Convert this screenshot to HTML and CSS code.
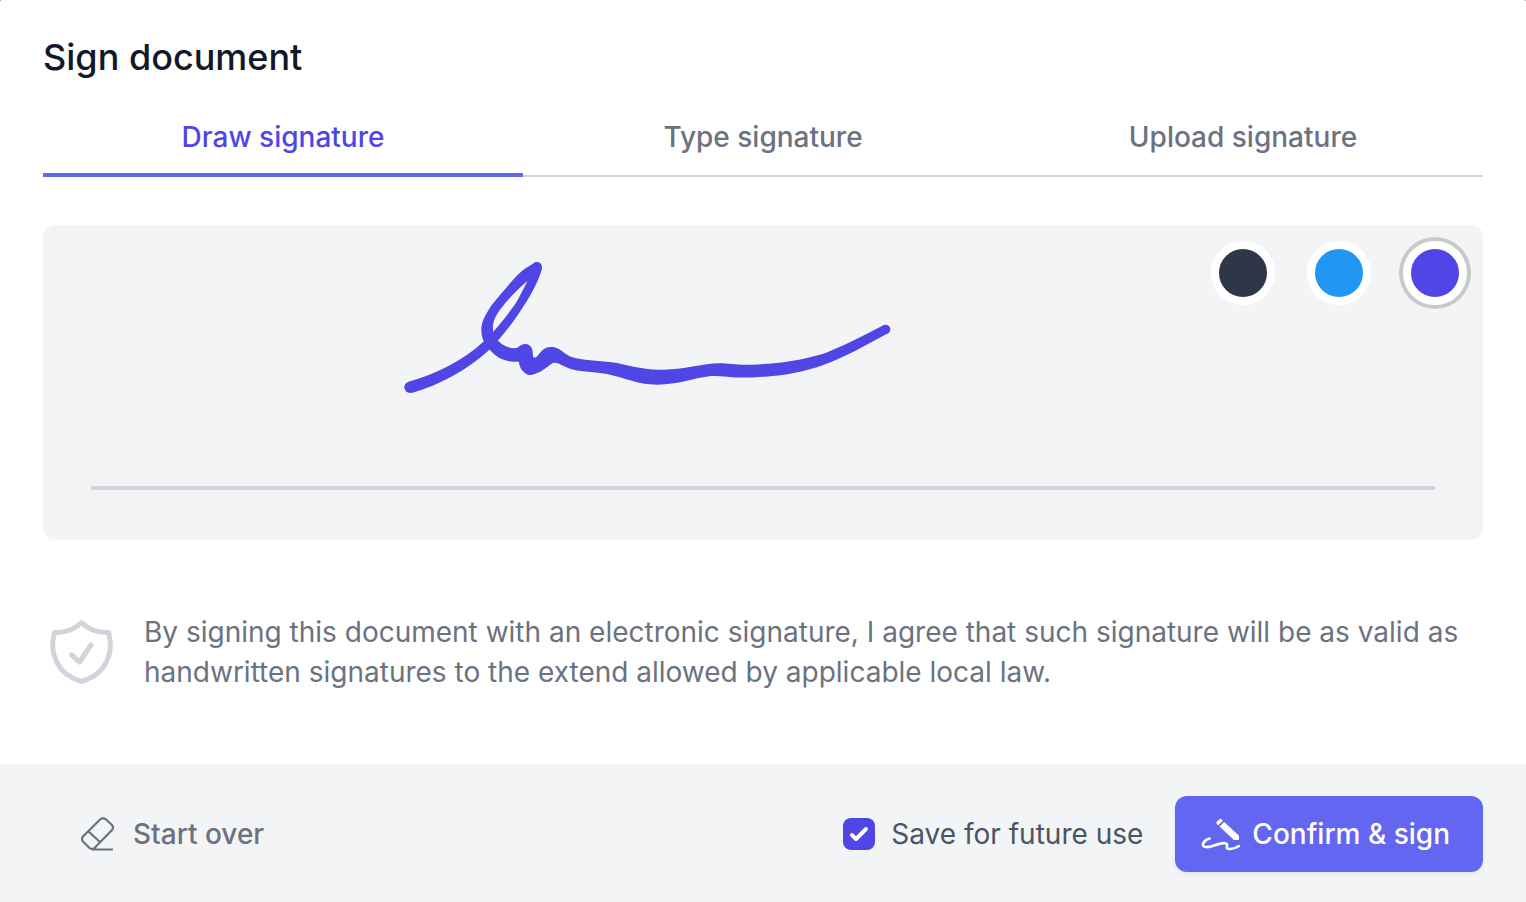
FILE: index.html
```html
<!DOCTYPE html>
<html lang="en">
<head>
    <meta charset="UTF-8">
    <meta name="viewport" content="width=device-width, initial-scale=1.0">
    <title>Sign document</title>
    <link rel="stylesheet" href="styles.css">
</head>
<body>
    <form class="dialog">
        <div class="content">
            <h1 class="title">Sign document</h1>

            <div class="tabs" role="tablist">
                <button class="tab active" type="button" role="tab" aria-selected="true">Draw signature</button>
                <button class="tab" type="button" role="tab" aria-selected="false">Type signature</button>
                <button class="tab" type="button" role="tab" aria-selected="false">Upload signature</button>
            </div>

            <!-- Drawing pad -->
            <div class="pad">
                <div class="colors">
                    <input class="color dark" type="radio" name="color" aria-label="Dark">
                    <input class="color blue" type="radio" name="color" aria-label="Blue">
                    <input class="color indigo" type="radio" name="color" aria-label="Indigo" checked>
                </div>
                <svg class="ink" viewBox="0 0 1530 480" aria-hidden="true">
                    <circle cx="60" cy="412" r="17"/>
                    <circle cx="441" cy="51" r="15"/>
                    <circle cx="1487" cy="238" r="14"/>
                    <path d="M55 395C150 368 222 328 280 275C322 236 355 192 380 155C395 128 404 110 412 93L427 46L456 57C440 108 416 146 390 185C370 215 348 245 325 270L295 302C230 360 155 402 65 429Z"/>
                    <path d="M436 37C425 45 408 52 390 68C370 86 350 112 330 135C312 156 300 170 290 190C278 210 274 225 274 240C274 263 282 281 298 298C319 325 350 336 375 335L387 335C387 349 394 359 404 368C412 376 422 377 434 372C456 366 472 350 488 339C502 334 515 347 545 358C575 366 630 367 660 374C700 382 735 399 780 403C850 409 910 384 962 378C995 376 1040 387 1110 381C1180 378 1240 366 1300 345C1370 320 1430 284 1494 250L1480 226C1410 262 1350 293 1300 311C1220 335 1150 341 1085 344C1040 346 1010 339 985 340C940 340 890 358 820 359C755 361 710 343 665 337C625 332 575 331 547 322C525 315 510 292 488 291C458 289 451 310 440 320C435 324 430 324 429 318L428 304C426 289 416 282 405 282C390 282 388 294 374 295C350 295 331 280 320 268C306 250 306 225 314 207C328 174 370 130 412 93L450 61Z"/>
                </svg>
                <div class="line"></div>
            </div>

            <div class="notice">
                <svg class="shield" viewBox="0 0 76 76" fill="none" stroke="currentColor" stroke-linecap="round" stroke-linejoin="round" aria-hidden="true">
                    <path stroke-width="5" d="M38.500 8.500C31.500 15.500 23 19 11.500 18.500C6 38 13 60 38.500 67.500C64 60 71 38 65.500 18.500C54 19 45.500 15.500 38.500 8.500Z"/>
                    <path stroke-width="5" d="M28.500 41L36.500 48L48 31"/>
                </svg>
                <p class="notice-text">By signing this document with an electronic signature, I agree that such signature will be as valid as handwritten signatures to the extend allowed by applicable local law.</p>
            </div>
        </div>

        <div class="footer">
            <button class="reset" type="reset">
                <svg class="eraser" viewBox="0 0 36 36" fill="none" stroke="currentColor" stroke-width="2.200" stroke-linejoin="round" aria-hidden="true">
                    <path d="M20 3.500L3 20.500Q1 23 3 25.500L9.500 32Q12 34 14.500 32L32 14Q34 11.500 32 9L26 3.500Q23 1 20 3.500ZM8.500 15.500L20.500 26.500M12 33.500H33"/>
                </svg>
                Start over
            </button>
            <label class="save">
                <input class="checkbox" type="checkbox" checked>
                Save for future use
            </label>
            <button class="confirm" type="submit">
                <svg class="pen" viewBox="0 0 40 36" aria-hidden="true">
                    <path fill="currentColor" d="M15.500 6L18.500 3.200Q19.500 2.400 20.500 3.200L22 4.800L17.300 9.300L15.700 7.700Q14.800 6.800 15.500 6ZM18.500 10.500L23.200 6L38 19.800V24H33Z"/>
                    <path fill="none" stroke="currentColor" stroke-width="2.600" stroke-linecap="round" d="M8.500 22.500C4 23.500 0 28.500 3 30.500C8 33.500 17 26.500 24 27.200C28.500 27.800 24 31.500 26.500 32.500C29.500 33.500 34 32.500 38 30"/>
                </svg>
                Confirm &amp; sign
            </button>
        </div>
    </form>
</body>
</html>
```
FILE: styles.css
```css
:root {
    --indigo: #4f46e5;
    --indigo-light: #6366f1;
    --gray-100: #f3f4f6;
    --gray-300: #d1d5db;
    --gray-500: #6b7280;
    --gray-600: #4b5563;
    --gray-900: #111827;
}

* {
    margin: 0;
    padding: 0;
    box-sizing: border-box;
}

body {
    background: #888;
    color: var(--gray-500);
    font-family: Inter, sans-serif;
    font-size: 28px;
    line-height: 40px;
}

button {
    border: none;
    background: none;
    color: inherit;
    font: inherit;
    font-weight: 500;
    cursor: pointer;
}

.dialog {
    display: flex;
    flex-direction: column;
    min-height: 100vh;
    background: #fff;
    border-radius: 2px 2px 0 0;
}

.content {
    flex: 1;
    padding: 33px 43px 0;
}

.title {
    color: var(--gray-900);
    font-size: 36px;
    font-weight: 500;
    line-height: 48px;
}

/* Tabs */
.tabs {
    display: grid;
    grid-template-columns: repeat(3, 1fr);
    margin: 36px 0 48px;
}

.tab {
    height: 60px;
    padding-bottom: 18px;
    border-bottom: 2px solid var(--gray-300);
}

.tab.active {
    padding-bottom: 16px;
    border-bottom: 4px solid var(--indigo-light);
    color: var(--indigo);
}

/* Drawing pad */
.pad {
    position: relative;
    display: flex;
    flex-direction: column;
    justify-content: space-between;
    min-height: 315px;
    padding: 16px 16px 50px;
    background: var(--gray-100);
    border-radius: 12px;
}

.colors {
    display: flex;
    justify-content: flex-end;
    gap: 32px;
}

.color {
    appearance: none;
    width: 64px;
    height: 64px;
    border: 8px solid #fff;
    border-radius: 50%;
    cursor: pointer;
}

.color:checked {
    box-shadow: 0 0 0 4px #c8c9ca;
}

.dark {
    background: #2d3748;
}

.blue {
    background: #2196f3;
}

.indigo {
    background: var(--indigo);
}

.ink {
    position: absolute;
    top: 25px;
    left: 347px;
    width: 510px;
    height: 160px;
    fill: var(--indigo);
}

.line {
    height: 4px;
    margin: 0 32px;
    background: var(--gray-300);
}

/* Legal notice */
.notice {
    display: flex;
    align-items: center;
    gap: 25px;
    padding: 72px 0;
}

.shield {
    flex: none;
    width: 76px;
    height: 76px;
    color: var(--gray-300);
}

/* Footer */
.footer {
    display: flex;
    align-items: center;
    padding: 32px 43px 30px;
    background: var(--gray-100);
}

.reset {
    display: flex;
    align-items: center;
    gap: 17px;
    margin-right: auto;
    padding: 0 37px;
}

.eraser {
    width: 36px;
    height: 36px;
}

.save {
    display: flex;
    align-items: center;
    gap: 16px;
    margin-right: 32px;
    color: var(--gray-600);
    cursor: pointer;
}

.checkbox {
    appearance: none;
    width: 32px;
    height: 32px;
    border-radius: 8px;
}

.checkbox:checked {
    background: var(--indigo) url("data:image/svg+xml,%3Csvg viewBox='0 0 16 16' fill='white' xmlns='http://www.w3.org/2000/svg'%3E%3Cpath d='M12.207 4.793a1 1 0 010 1.414l-5 5a1 1 0 01-1.414 0l-2-2a1 1 0 011.414-1.414L6.500 9.086l4.293-4.293a1 1 0 011.414 0z'/%3E%3C/svg%3E") center / 100% 100%;
}

.confirm {
    display: flex;
    align-items: center;
    gap: 11px;
    padding: 18px 33px 18px 26px;
    background: var(--indigo-light);
    border-radius: 12px;
    box-shadow: 0 2px 4px rgba(0, 0, 0, 0.05);
    color: #fff;
}

.pen {
    width: 40px;
    height: 36px;
}
```
